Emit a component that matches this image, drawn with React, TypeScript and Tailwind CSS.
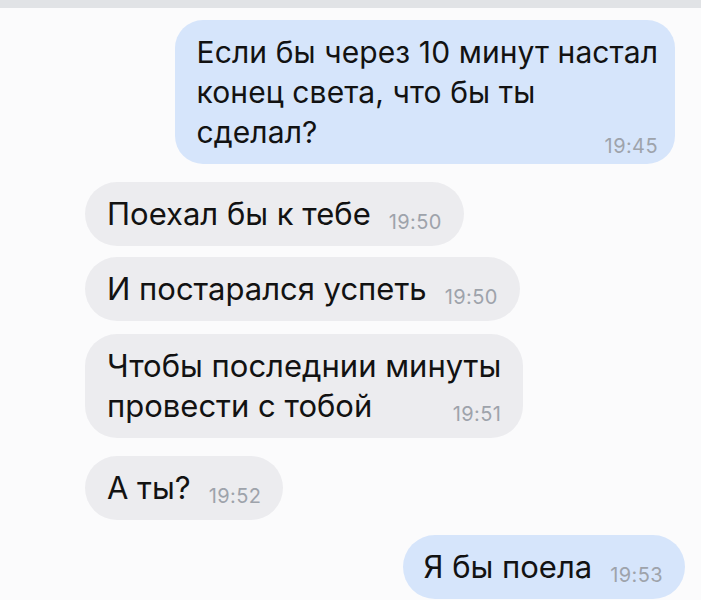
import React from "react";

type Msg = {
  lines: string[];
  time: string;
  offset: string;
};

const messages: Msg[] = [
  { lines: ["Поехал бы к тебе"], time: "19:50", offset: "mt-[18px]" },
  { lines: ["И постарался успеть"], time: "19:50", offset: "mt-[11px]" },
  { lines: ["Чтобы последнии минуты", "провести с тобой"], time: "19:51", offset: "mt-[13px]" },
  { lines: ["А ты?"], time: "19:52", offset: "mt-[18px]" },
];

function Lines({ lines, time, dropTime }: { lines: string[]; time: string; dropTime?: boolean }) {
  const last = lines[lines.length - 1];
  return (
    <div className="whitespace-nowrap text-[#121212]">
      {lines.slice(0, -1).map((l) => (
        <div key={l}>{l}</div>
      ))}
      <div className="flex items-end justify-between gap-[18px]">
        <span>{last}</span>
        <span
          className={`shrink-0 text-[20px] leading-[24px] tracking-[0.4px] text-[#9ea3ab] ${
            dropTime ? "mb-[-6px] text-[19px] text-[#9aa3b0]" : ""
          }`}
        >
          {time}
        </span>
      </div>
    </div>
  );
}

export default function App() {
  return (
    <div
      className="h-[600px] w-[701px] overflow-hidden bg-[#fbfbfc]"
      style={{ fontFamily: 'Inter, "Liberation Sans", sans-serif' }}
    >
      <div className="h-[8px] bg-[#e1e3e6]" />

      <div className="flex flex-col pl-[85px]">
        {/* outgoing question */}
        <div className="mt-[12px] mr-[26px] self-end rounded-[28px] bg-[#d6e5fb] py-[12px] pl-[22px] pr-[17px] text-[30px] leading-[40px] tracking-[0.1px]">
          <Lines
            lines={["Если бы через 10 минут настал", "конец света, что бы ты", "сделал?"]}
            time="19:45"
            dropTime
          />
        </div>

        {messages.map((m) => (
          <div
            key={m.time + m.lines[0]}
            className={`${m.offset} self-start rounded-[32px] bg-[#ececef] py-3 pl-[22px] pr-[22px] text-[31px] leading-[40px]`}
          >
            <Lines lines={m.lines} time={m.time} />
          </div>
        ))}

        <div className="mt-[15px] mr-[16px] self-end rounded-[32px] bg-[#d6e5fb] py-3 pl-[20px] pr-[22px] text-[31px] leading-[40px]">
          <Lines lines={["Я бы поела"]} time="19:53" />
        </div>
      </div>
    </div>
  );
}
